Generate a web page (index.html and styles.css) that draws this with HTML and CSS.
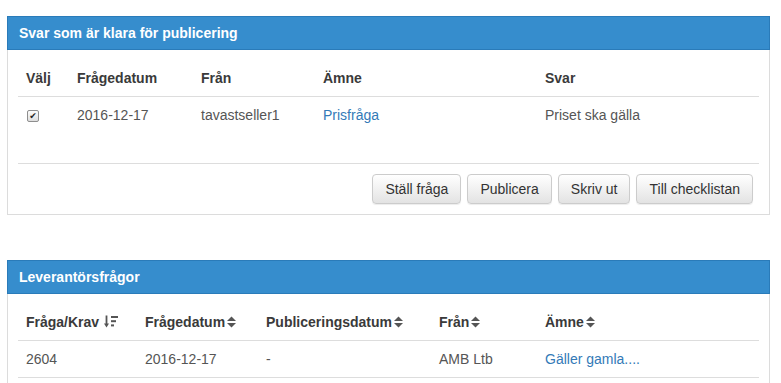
FILE: index.html
```html
<!DOCTYPE html>
<html lang="sv">
<head>
<meta charset="utf-8">
<title>Svar</title>
<link rel="stylesheet" href="styles.css">
</head>
<body>
<div class="page">
  <section class="panel">
    <div class="panel-heading">Svar som är klara för publicering</div>
    <div class="panel-body">
      <table class="tbl tbl-answers">
        <colgroup><col class="c1"><col class="c2"><col class="c3"><col class="c4"><col class="c5"></colgroup>
        <thead>
          <tr><th>Välj</th><th>Frågedatum</th><th>Från</th><th>Ämne</th><th>Svar</th></tr>
        </thead>
        <tbody>
          <tr>
            <td><input type="checkbox" class="chk" checked></td>
            <td>2016-12-17</td>
            <td>tavastseller1</td>
            <td><a href="#" class="link">Prisfråga</a></td>
            <td>Priset ska gälla</td>
          </tr>
        </tbody>
      </table>
      <div class="panel-actions">
        <button class="btn">Ställ fråga</button>
        <button class="btn">Publicera</button>
        <button class="btn">Skriv ut</button>
        <button class="btn">Till checklistan</button>
      </div>
    </div>
  </section>

  <section class="panel panel-second">
    <div class="panel-heading">Leverantörsfrågor</div>
    <div class="panel-body">
      <table class="tbl tbl-questions">
        <colgroup><col class="d1"><col class="d2"><col class="d3"><col class="d4"><col class="d5"></colgroup>
        <thead>
          <tr>
            <th>Fråga/Krav <svg class="ico-amount" width="14" height="13" viewBox="0 0 14 13"><rect x="1.6" y="0.5" width="1.8" height="9" fill="#555"/><polygon points="0,8.5 5,8.5 2.5,12.5" fill="#555"/><rect x="7" y="1" width="7" height="2" fill="#555"/><rect x="7" y="5.2" width="5" height="2" fill="#555"/><rect x="7" y="9.4" width="3" height="2" fill="#555"/></svg></th>
            <th>Frågedatum<svg class="ico-sort" width="9" height="12" viewBox="0 0 9 12"><polygon points="0,5 4.5,0.5 9,5" fill="#555"/><polygon points="0,7 9,7 4.5,11.5" fill="#555"/></svg></th>
            <th>Publiceringsdatum<svg class="ico-sort" width="9" height="12" viewBox="0 0 9 12"><polygon points="0,5 4.5,0.5 9,5" fill="#555"/><polygon points="0,7 9,7 4.5,11.5" fill="#555"/></svg></th>
            <th>Från<svg class="ico-sort" width="9" height="12" viewBox="0 0 9 12"><polygon points="0,5 4.5,0.5 9,5" fill="#555"/><polygon points="0,7 9,7 4.5,11.5" fill="#555"/></svg></th>
            <th>Ämne<svg class="ico-sort" width="9" height="12" viewBox="0 0 9 12"><polygon points="0,5 4.5,0.5 9,5" fill="#555"/><polygon points="0,7 9,7 4.5,11.5" fill="#555"/></svg></th>
          </tr>
        </thead>
        <tbody>
          <tr>
            <td>2604</td>
            <td>2016-12-17</td>
            <td>-</td>
            <td>AMB Ltb</td>
            <td><a href="#" class="link">Gäller gamla....</a></td>
          </tr>
        </tbody>
      </table>
    </div>
  </section>
</div>
</body>
</html>
```
FILE: styles.css
```css
html, body {
  margin: 0;
  padding: 0;
  background: #fff;
}

body {
  font-family: "Liberation Sans", Arial, sans-serif;
  font-size: 14px;
  line-height: 20px;
  color: #555;
  overflow: hidden;
}

.page {
  padding: 16px 11px 0 7px;
}

.panel {
  border: 1px solid #dcdcdc;
  border-top: 0;
  background: #fff;
}

.panel-second {
  margin-top: 45px;
}

.panel-heading {
  margin: 0 -1px;
  height: 32px;
  line-height: 32px;
  padding: 0 11px;
  background: #368dcd;
  border: 1px solid #2a7bb9;
  color: #fff;
  font-weight: bold;
  font-size: 14px;
}

.panel-body {
  padding: 10px;
}

.tbl {
  width: 100%;
  table-layout: fixed;
  border-collapse: collapse;
  border-spacing: 0;
}

.tbl-answers {
  margin-bottom: 30px;
}

.tbl th {
  text-align: left;
  font-weight: bold;
  color: #3a3a3a;
  padding: 8px;
  border-bottom: 1px solid #dddddd;
  white-space: nowrap;
  vertical-align: middle;
}

.tbl td {
  padding: 8px;
  vertical-align: middle;
  white-space: nowrap;
  overflow: hidden;
}

.tbl-questions td {
  border-bottom: 1px solid #dddddd;
}

.c1 { width: 51px; }
.c2 { width: 124px; }
.c3 { width: 122px; }
.c4 { width: 222px; }
.c5 { width: 222px; }

.d1 { width: 119px; }
.d2 { width: 121px; }
.d3 { width: 173px; }
.d4 { width: 106px; }
.d5 { width: 222px; }

.link {
  color: #337ab7;
  text-decoration: none;
}

.chk {
  -webkit-appearance: none;
  appearance: none;
  width: 12px;
  height: 12px;
  margin: 5px 0 0 1px;
  border: 1px solid #8e8e8e;
  border-radius: 2px;
  background: linear-gradient(#fcfcfc, #dedede);
  display: inline-flex;
  align-items: center;
  justify-content: center;
  vertical-align: top;
}

.chk:checked::after {
  content: "\2714";
  font-family: "DejaVu Sans", sans-serif;
  font-size: 9px;
  line-height: 10px;
  color: #222;
}

.ico-sort {
  margin-left: 2px;
  vertical-align: -1px;
}

.ico-amount {
  margin-left: 1px;
  vertical-align: -1px;
}

.panel-actions {
  border-top: 1px solid #dddddd;
  padding: 10px 6px 0 0;
  display: flex;
  justify-content: flex-end;
  gap: 6px;
}

.btn {
  font-family: "Liberation Sans", Arial, sans-serif;
  font-size: 14px;
  line-height: 20px;
  color: #333;
  padding: 4px 12px;
  border: 1px solid #cccccc;
  border-radius: 4px;
  background: linear-gradient(#ffffff 0%, #e3e3e3 100%);
  box-shadow: inset 0 1px 0 rgba(255,255,255,.15), 0 1px 1px rgba(0,0,0,.075);
  cursor: pointer;
}
```
